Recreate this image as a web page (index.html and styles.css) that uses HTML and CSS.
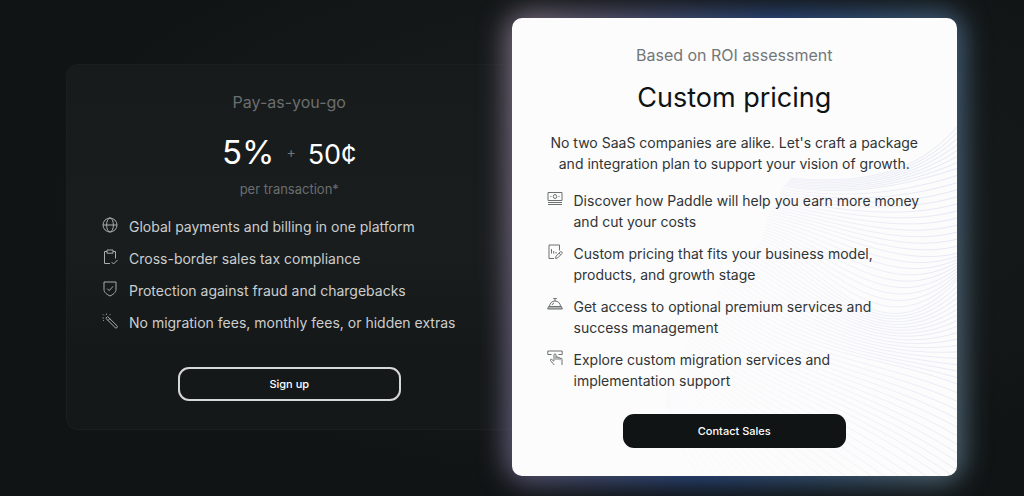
FILE: index.html
```html
<!DOCTYPE html>
<html lang="en">
<head>
<meta charset="utf-8">
<meta name="viewport" content="width=device-width, initial-scale=1">
<title>Pricing</title>
<link rel="stylesheet" href="styles.css">
</head>
<body>
<main class="plans">
  <section class="plan plan-basic">
    <h2 class="plan-label">Pay-as-you-go</h2>
    <p class="price"><span class="price-rate">5%</span><span class="price-plus">+</span><span class="price-fee">50¢</span></p>
    <p class="price-note">per transaction*</p>
    <ul class="features">
      <li class="feature">
        <svg class="icon" viewBox="0 0 16 16" aria-hidden="true"><circle cx="8" cy="8" r="7"/><ellipse cx="8" cy="8" rx="3.4" ry="7"/><path d="M1 8h14"/></svg>
        <span>Global payments and billing in one platform</span>
      </li>
      <li class="feature">
        <svg class="icon" viewBox="0 0 16 16" aria-hidden="true"><path d="M5 2.500H2.500v12H8M11 2.500h2.500v7M5 1h6v3.200H5zM9.500 13l2 2 4-4"/></svg>
        <span>Cross-border sales tax compliance</span>
      </li>
      <li class="feature">
        <svg class="icon" viewBox="0 0 16 16" aria-hidden="true"><path d="M2 1h12v7.500c0 3-3 5-6 6.500-3-1.500-6-3.500-6-6.500zM5.200 7.600l2 2L11 5.400"/></svg>
        <span>Protection against fraud and chargebacks</span>
      </li>
      <li class="feature">
        <svg class="icon" viewBox="0 0 16 16" aria-hidden="true"><path d="M3.800 5.300 5.600 3.500 15 12.800a1.250 1.250 0 0 1-1.800 1.800zM6 7.500l1.900-1.900M4.400 1.800V.6M1.900 2.300 1 1.400M1.800 5H.6M8.300 1.300 7.600 2.200M1 8l.8-.8"/></svg>
        <span>No migration fees, monthly fees, or hidden extras</span>
      </li>
    </ul>
    <button type="button" class="button button-outline">Sign up</button>
  </section>

  <section class="plan plan-custom">
    <div class="plan-surface"><svg class="waves" viewBox="0 0 446 458" preserveAspectRatio="xMaxYMax meet" aria-hidden="true">
      <defs>
        <linearGradient id="wave-stroke" gradientUnits="userSpaceOnUse" x1="180" y1="290" x2="446" y2="220">
          <stop offset="0" stop-color="#dcdcf0" stop-opacity="0.15"/>
          <stop offset="0.4" stop-color="#dcdcf0" stop-opacity="0.4"/>
          <stop offset="1" stop-color="#d8dbed" stop-opacity="0.9"/>
        </linearGradient>
      </defs>
      <g id="wave-lines" fill="none" stroke="url(#wave-stroke)" stroke-width="0.7"></g>
    </svg></div>
    <p class="plan-label">Based on ROI assessment</p>
    <h2 class="plan-title">Custom pricing</h2>
    <p class="plan-intro">No two SaaS companies are alike. Let's craft a package and integration plan to support your vision of growth.</p>
    <ul class="features">
      <li class="feature">
        <svg class="icon" viewBox="0 0 16 16" aria-hidden="true"><path d="M1 1.500h14v8H1zM1 11.500h14M1 13.500h14"/><ellipse cx="8" cy="5.500" rx="1.700" ry="2"/><path d="M3.500 5.500h1M11.500 5.500h1"/></svg>
        <span>Discover how Paddle will help you earn more money and cut your costs</span>
      </li>
      <li class="feature">
        <svg class="icon" viewBox="0 0 16 16" aria-hidden="true"><path d="M7 14.500H2V1h10.500v5.500M4.500 5v4.500M6.700 7v2.500M9 8v1.500M8.500 14.500l.6-2.400 4-4.100a1.100 1.100 0 0 1 1.800 1.600l-4.100 4.200zM12 9.200l1.700 1.600"/></svg>
        <span>Custom pricing that fits your business model, products, and growth stage</span>
      </li>
      <li class="feature">
        <svg class="icon" viewBox="0 0 16 16" aria-hidden="true"><path d="M2.500 9.500a5.500 5.500 0 0 1 11 0M1.500 9.500h13l.8 2.500H.7zM1 11h14M8 4V1.500M6.300 1.500h3.400M5 8a3 3 0 0 1 2-2"/></svg>
        <span>Get access to optional premium services and success management</span>
      </li>
      <li class="feature">
        <svg class="icon" viewBox="0 0 16 16" aria-hidden="true"><path d="M4.500 4.500H.8V1h14.400v3.500h-3.700M7 10.800V4.900a1 1 0 0 1 2 0v5M9 7.600a1 1 0 0 1 2 .3v2M11 8.300a1 1 0 0 1 2 .3v1.600M13 9a1 1 0 0 1 2 .4V15M7 11.300 4.800 9.500c-1-.7-1.900.2-1.300 1.100L6 13.500l1.200 1.500"/></svg>
        <span>Explore custom migration services and implementation support</span>
      </li>
    </ul>
    <button type="button" class="button button-solid">Contact Sales</button>
  </section>
</main>
<script src="waves.js"></script>
</body>
</html>
```

FILE: styles.css
```css
* {
  box-sizing: border-box;
}

body {
  margin: 0;
  min-height: 100vh;
  background: radial-gradient(ellipse 60% 60% at 62% 40%, #1b1f1f, #101415);
  color: #cccece;
  font-family: Inter, "Liberation Sans", sans-serif;
  font-size: 14px;
  line-height: 21px;
}

h2,
p,
ul {
  margin: 0;
  padding: 0;
  font-weight: 400;
}

.plans {
  display: grid;
  grid-template-columns: 1fr 1fr;
  align-items: center;
  max-width: 1024px;
  margin: 0 auto;
  padding: 18px 67px 20px 66px;
}

.plan {
  display: flex;
  flex-direction: column;
  align-items: center;
  padding: 25px 35px 28px;
}

.plan-basic {
  border: 1px solid #1a1e1f;
  border-right: 0;
  border-radius: 12px 0 0 12px;
  background: linear-gradient(#171b1c, #191d1e 50%, #141819 80%);
}

.plan-custom {
  position: relative;
  isolation: isolate;
  color: #313435;
}

.plan-custom::before {
  content: "";
  position: absolute;
  z-index: -2;
  inset: -7px;
  border-radius: 24px;
  background: linear-gradient(100deg, #72667a 6%, #5c5876 18%, #2b4a86 50%, #38567a 72%, #506676 96%);
  filter: blur(13px);
}

.plan-surface {
  position: absolute;
  z-index: -1;
  inset: 0;
  overflow: hidden;
  border-radius: 10px;
  background: #fcfcfd;
}

.waves {
  display: block;
  width: 100%;
  height: 100%;
}

.plan-label {
  color: #747778;
  font-size: 16px;
  line-height: 24px;
}

.plan-basic .plan-label,
.price-note {
  color: #6b6e6f;
}

.price {
  display: flex;
  align-items: baseline;
  gap: 12px;
  height: 40px;
  margin-top: 18px;
  color: #fff;
  line-height: 40px;
}

.price-rate {
  font-size: 33px;
}

.price-plus {
  align-self: center;
  color: #747778;
}

.price-fee {
  font-size: 27px;
}

.price-note {
  margin-top: 7px;
  font-size: 13px;
}

.plan-title {
  margin-top: 13px;
  color: #0f1314;
  font-size: 27px;
  line-height: 36px;
}

.plan-intro {
  margin-top: 16px;
  text-align: center;
}

.features {
  display: grid;
  gap: 11px;
  width: 100%;
  margin-top: 16px;
  list-style: none;
}

.feature {
  display: flex;
  gap: 11px;
}

.icon {
  flex: none;
  width: 16px;
  height: 16px;
  margin-top: 1px;
  fill: none;
  stroke: #a9acac;
  stroke-width: 1;
}

.plan-custom .icon {
  stroke: #6d7071;
}

.button {
  width: 60%;
  max-width: 223px;
  height: 34px;
  border-radius: 11px;
  color: #fff;
  font: 500 11px/20px Inter, "Liberation Sans", sans-serif;
  cursor: pointer;
}

.button-outline {
  margin-top: 34px;
  border: 2px solid #d6d8d8;
  background: transparent;
}

.button-solid {
  margin-top: 23px;
  border: 0;
  background: #101415;
}

@media (max-width: 760px) {
  .plans {
    grid-template-columns: 1fr;
    gap: 40px;
    padding: 32px 24px;
  }
}
```

FILE: waves.js
```javascript
// Each row is one cubic curve: start, two control points, end.
const keyCurves = [
  [279, 160, 349, 165, 402, 158, 446, 108],
  [272, 168, 340, 180, 400, 165, 446, 150],
  [256, 198, 325, 212, 385, 250, 446, 235],
  [250, 222, 320, 250, 366, 345, 446, 262],
  [228, 242, 305, 290, 365, 340, 446, 308],
  [206, 272, 290, 340, 362, 335, 446, 366],
  [178, 315, 245, 365, 340, 392, 446, 470],
  [156, 370, 200, 415, 260, 480, 310, 540],
  [154, 384, 158, 430, 180, 465, 210, 500]
];
const linesPerStep = [7, 12, 9, 8, 9, 12, 16, 8];

const group = document.getElementById("wave-lines");

linesPerStep.forEach((count, step) => {
  for (let i = 0; i < count; i++) {
    const t = i / count;
    const p = keyCurves[step].map((v, k) => Math.round((v + (keyCurves[step + 1][k] - v) * t) * 10) / 10);
    const path = document.createElementNS("http://www.w3.org/2000/svg", "path");
    path.setAttribute("d", `M${p[0]} ${p[1]}C${p[2]} ${p[3]} ${p[4]} ${p[5]} ${p[6]} ${p[7]}`);
    group.appendChild(path);
  }
});
```
